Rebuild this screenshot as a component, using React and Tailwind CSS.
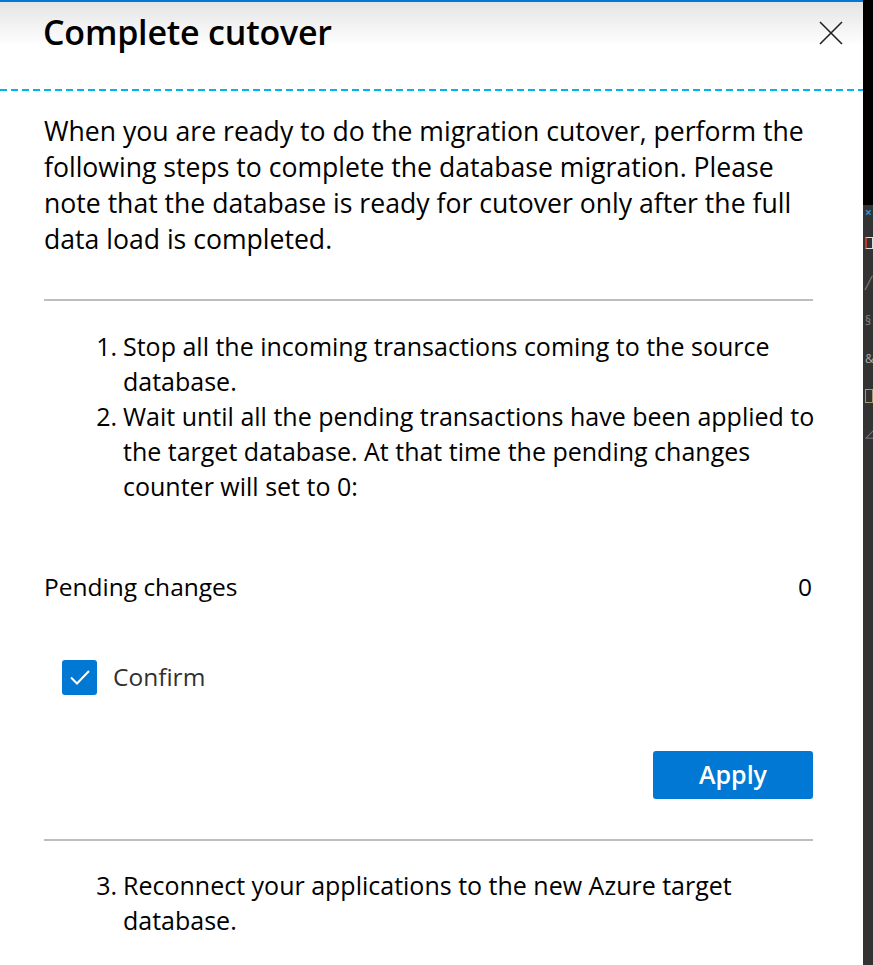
export default function App() {
  const font = { fontFamily: '"Open Sans", "Noto Sans", sans-serif' };

  return (
    <div className="flex w-[873px] h-[965px] overflow-hidden bg-white text-black" style={font}>
      {/* Blade */}
      <div className="w-[863px] flex flex-col">
        {/* Header */}
        <div className="h-[89px] border-t-2 border-[#0078d4] bg-gradient-to-b from-[#e4e4e4] via-white to-white flex items-start justify-between pl-[43px] pr-[18px]">
          <h1 className="text-[34px] font-semibold leading-none pt-[13px] tracking-[-0.2px]">Complete cutover</h1>
          <button className="mt-[17px] w-[28px] h-[28px] flex items-center justify-center text-[#222]">
            <svg width="26" height="26" viewBox="0 0 26 26" fill="none" stroke="currentColor" strokeWidth="1.6">
              <path d="M2 2L24 24M24 2L2 24" />
            </svg>
          </button>
        </div>
        <div className="h-[2px] bg-[repeating-linear-gradient(90deg,#00b4f0_0_7px,transparent_7px_11px)]" />

        {/* Body */}
        <div className="pl-[44px] pr-[50px]">
          <p className="mt-[22px] -mr-[13px] text-[26.6px] leading-[36px]">
            When you are ready to do the migration cutover, perform the following steps to complete the database migration. Please note that the database is ready for cutover only after the full data load is completed.
          </p>

          <div className="mt-[42px] h-[2px] bg-[#bebebe]" />

          <ol className="mt-[28px] -mr-[17px] text-[25px] leading-[35px]">
            <li className="flex">
              <span className="w-[79px] shrink-0 text-right pr-[6px]">1.</span>
              <span>Stop all the incoming transactions coming to the source database.</span>
            </li>
            <li className="flex">
              <span className="w-[79px] shrink-0 text-right pr-[6px]">2.</span>
              <span>Wait until all the pending transactions have been applied to the target database. At that time the pending changes counter will set to 0:</span>
            </li>
          </ol>

          <div className="mt-[65px] flex items-center justify-between text-[24.5px] leading-[36px]">
            <span>Pending changes</span>
            <span className="pr-[1px]">0</span>
          </div>

          <label className="mt-[54px] ml-[18px] flex items-center gap-[16px] text-[24.5px]">
            <span className="w-[35px] h-[35px] rounded-[3px] bg-[#0078d4] flex items-center justify-center">
              <svg width="22" height="22" viewBox="0 0 22 22" fill="none" stroke="white" strokeWidth="2">
                <path d="M2 11.5L8 17.5L20 5" />
              </svg>
            </span>
            <span className="text-[#323130]">Confirm</span>
          </label>

          <div className="mt-[55px] flex justify-end">
            <button className="w-[160px] h-[48px] rounded-[3px] bg-[#0078d4] text-white font-semibold text-[25px]">
              Apply
            </button>
          </div>

          <div className="mt-[40px] h-[2px] bg-[#bebebe]" />

          <ol className="mt-[27px] -mr-[17px] text-[25px] leading-[35px]">
            <li className="flex">
              <span className="w-[79px] shrink-0 text-right pr-[6px]">3.</span>
              <span>Reconnect your applications to the new Azure target database.</span>
            </li>
          </ol>
        </div>
      </div>

      {/* Edge of the page behind */}
      <div className="w-[10px] flex flex-col">
        <div className="h-[205px] bg-black" />
        <div className="flex-1 bg-[#333333] flex flex-col items-start pl-[2px] gap-[18px] pt-[2px] text-[12px] leading-none">
          <span className="text-[#2a8fe0] font-bold">×</span>
          <span className="w-[8px] h-[12px] border border-[#ddd] border-l-[2px] border-l-[#c0392b]" />
          <span className="text-[#888] mt-[10px]">╱</span>
          <span className="text-[#888] mt-[8px]">§</span>
          <span className="text-[#aaa] mt-[8px]">&amp;</span>
          <span className="w-[8px] h-[14px] border border-[#a89a70] mt-[6px]" />
          <span className="text-[#888] mt-[6px]">◿</span>
        </div>
      </div>
    </div>
  );
}
